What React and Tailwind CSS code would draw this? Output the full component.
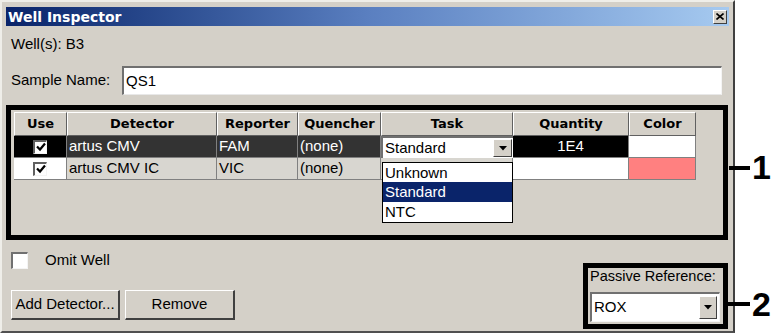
const cols = [53, 150, 81, 83, 132, 116, 67];
const heads = ['Use', 'Detector', 'Reporter', 'Quencher', 'Task', 'Quantity', 'Color'];

function Check({ size = 14 }) {
  return (
    <div
      className="bg-white border-t-2 border-l-2 border-t-[#606060] border-l-[#606060] border-r border-b border-r-[#f4f4f4] border-b-[#f4f4f4] flex items-center justify-center"
      style={{ width: size, height: size }}
    >
      <svg width="10" height="10" viewBox="0 0 10 10">
        <path d="M1 4.5 L4 7.5 L9 1.5" stroke="#000" strokeWidth="2.2" fill="none" />
      </svg>
    </div>
  );
}

function DropBtn({ w = 19, h = 18 }) {
  return (
    <div
      className="bg-[#d4d0c8] border-t border-l border-white border-r border-b border-r-[#404040] border-b-[#404040] flex items-center justify-center shrink-0"
      style={{ width: w, height: h }}
    >
      <svg width="8" height="5" viewBox="0 0 8 5">
        <path d="M0 0 L8 0 L4 4.5 Z" fill="#000" />
      </svg>
    </div>
  );
}

function Btn({ label, w }) {
  return (
    <div
      className="h-[30px] bg-[#d4d0c8] border-t border-l border-white border-r-2 border-b-2 border-r-[#404040] border-b-[#404040] flex items-center justify-center text-[15px] text-black"
      style={{ width: w }}
    >
      {label}
    </div>
  );
}

export default function App() {
  return (
    <div className="w-[771px] h-[333px] bg-white relative overflow-hidden font-['Liberation_Sans',Arial,sans-serif] text-black">
      <div className="w-[735px] h-[333px] bg-[#d4d0c8] border-t-2 border-l-2 border-t-[#efeee9] border-l-[#efeee9] border-r-2 border-b-2 border-r-[#404040] border-b-[#505050] pt-[5px] px-[4px] flex flex-col">
        {/* title bar */}
        <div className="h-[19px] bg-gradient-to-r from-[#0a246a] via-[#5a7fc0] to-[#a6caf0] flex items-center justify-between pl-[2px] pr-[2px]">
          <span className="text-white font-bold text-[14px] font-['DejaVu_Sans',sans-serif] leading-none">Well Inspector</span>
          <div className="w-[14px] h-[14px] bg-[#d4d0c8] border-t border-l border-white border-r border-b border-r-[#404040] border-b-[#404040] flex items-center justify-center">
            <svg width="8" height="7" viewBox="0 0 8 7">
              <path d="M0.5 0.5 L7.5 6.5 M7.5 0.5 L0.5 6.5" stroke="#000" strokeWidth="1.6" />
            </svg>
          </div>
        </div>

        <div className="ml-[5px] mt-[9px] h-[18px] leading-[18px] text-[15px]">Well(s): B3</div>

        <div className="mt-[13px] flex items-center">
          <span className="ml-[5px] w-[111px] text-[15px]">Sample Name:</span>
          <div className="w-[600px] h-[29px] bg-white border-t-2 border-l-2 border-t-[#707070] border-l-[#707070] border-r border-b border-r-[#f4f4f4] border-b-[#e8e8e8] flex items-center pl-[2px] text-[15px]">
            QS1
          </div>
        </div>

        {/* detector table */}
        <div className="mt-[10px] w-[722px] h-[135px] border-[5px] border-black pl-[3px] pt-[2px]">
          <div className="relative">
            <div className="flex h-[24px]">
              {heads.map((h, i) => (
                <div
                  key={h}
                  className="bg-[#d4d0c8] border-t border-l border-white border-r border-b border-r-[#606060] border-b-[#606060] flex items-center justify-center font-bold text-[13px] font-['DejaVu_Sans',sans-serif]"
                  style={{ width: cols[i] }}
                >
                  {h}
                </div>
              ))}
            </div>
            {/* row 1 */}
            <div className="flex h-[22px] text-[15px]">
              <div className="bg-black border-r border-b border-[#808080] flex items-center justify-center" style={{ width: cols[0] }}>
                <Check />
              </div>
              <div className="bg-[#333333] text-white border-r border-b border-[#808080] flex items-center pl-[2px]" style={{ width: cols[1] }}>artus CMV</div>
              <div className="bg-[#333333] text-white border-r border-b border-[#808080] flex items-center pl-[2px]" style={{ width: cols[2] }}>FAM</div>
              <div className="bg-[#333333] text-white border-r border-b border-[#808080] flex items-center pl-[2px]" style={{ width: cols[3] }}>(none)</div>
              <div className="bg-white border-t-2 border-l-2 border-t-[#707070] border-l-[#707070] flex items-center justify-between pl-[2px] pr-[1px]" style={{ width: cols[4] }}>
                <span>Standard</span>
                <DropBtn w={19} h={18} />
              </div>
              <div className="bg-black text-white border-r border-b border-[#808080] flex items-center justify-center" style={{ width: cols[5] }}>1E4</div>
              <div className="bg-white border-r border-b border-[#808080]" style={{ width: cols[6] }} />
            </div>
            {/* row 2 */}
            <div className="flex h-[22px] text-[15px]">
              <div className="bg-white border-r border-b border-[#808080] flex items-center justify-center" style={{ width: cols[0] }}>
                <Check />
              </div>
              <div className="bg-[#d8d6d0] border-r border-b border-[#808080] flex items-center pl-[2px]" style={{ width: cols[1] }}>artus CMV IC</div>
              <div className="bg-[#d8d6d0] border-r border-b border-[#808080] flex items-center pl-[2px]" style={{ width: cols[2] }}>VIC</div>
              <div className="bg-[#d8d6d0] border-r border-b border-[#808080] flex items-center pl-[2px]" style={{ width: cols[3] }}>(none)</div>
              <div className="bg-[#d8d6d0] border-r border-b border-[#808080]" style={{ width: cols[4] }} />
              <div className="bg-white border-r border-b border-[#808080]" style={{ width: cols[5] }} />
              <div className="bg-[#ff8080] border-r border-b border-[#808080]" style={{ width: cols[6] }} />
            </div>

            {/* open task list */}
            <div className="absolute left-[368px] top-[50px] w-[131px] h-[61px] bg-white border border-black text-[15px] flex flex-col">
              <div className="h-[19px] leading-[19px] pl-[2px]">Unknown</div>
              <div className="h-[20px] leading-[20px] pl-[2px] bg-[#0a246a] text-white">Standard</div>
              <div className="h-[20px] leading-[20px] pl-[2px]">NTC</div>
            </div>
          </div>
        </div>

        {/* bottom area */}
        <div className="flex justify-between">
          <div className="flex flex-col">
            <div className="mt-[12px] ml-[5px] flex items-center h-[17px]">
              <div className="w-[17px] h-[17px] bg-white border-t-2 border-l-2 border-t-[#707070] border-l-[#707070] border-r border-b border-r-[#f4f4f4] border-b-[#f4f4f4]" />
              <span className="ml-[17px] text-[15px]">Omit Well</span>
            </div>
            <div className="mt-[21px] ml-[5px] flex gap-[5px]">
              <Btn label="Add Detector..." w={109} />
              <Btn label="Remove" w={110} />
            </div>
          </div>

          <div className="mt-[23px] mr-[1px] w-[145px] h-[66px] border-[5px] border-black pl-[2px]">
            <div className="h-[16px] leading-[16px] text-[14.5px]">Passive Reference:</div>
            <div className="mt-[8px] w-[130px] h-[30px] bg-white border-t-2 border-l-2 border-t-[#707070] border-l-[#707070] border-r border-b border-r-[#f4f4f4] border-b-[#f4f4f4] flex items-center justify-between pl-[2px] pr-[2px] text-[15px]">
              <span>ROX</span>
              <DropBtn w={18} h={23} />
            </div>
          </div>
        </div>
      </div>

      {/* callouts */}
      <div className="absolute left-[729px] top-[166px] w-[21px] h-[4px] bg-black" />
      <div className="absolute left-[752px] top-[147px] text-[34px] font-bold leading-[40px]">1</div>
      <div className="absolute left-[728px] top-[302px] w-[22px] h-[4px] bg-black" />
      <div className="absolute left-[752px] top-[284px] text-[34px] font-bold leading-[40px]">2</div>
    </div>
  );
}
